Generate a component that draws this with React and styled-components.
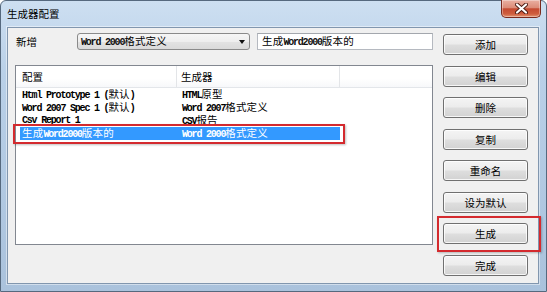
import React from 'react'
import styled, { createGlobalStyle } from 'styled-components'

const GlobalStyle = createGlobalStyle`
  html, body {
    margin: 0;
    padding: 0;
    background: #ffffff;
  }
  body {
    width: 547px;
    height: 292px;
    overflow: hidden;
  }
`

const Window = styled.div`
  box-sizing: border-box;
  width: 547px;
  height: 292px;
  display: flex;
  flex-direction: column;
  padding: 0 7px 7px 6px;
  border: 1px solid #56697e;
  border-radius: 6px 6px 0 0;
  background: linear-gradient(180deg, #cddff1 0%, #b9d0e8 25%, #aac2dc 100%);
  font-family: "Noto Sans CJK SC", sans-serif;
  color: #000;
`

const TitleBar = styled.div`
  height: 26px;
  display: flex;
  align-items: center;
`

const Title = styled.div`
  font-size: 10.5px;
  line-height: 26px;
  color: #000;
`

const CloseButton = styled.div`
  box-sizing: border-box;
  align-self: flex-start;
  margin-left: auto;
  margin-right: -2px;
  margin-top: -1px;
  width: 40px;
  height: 18px;
  display: flex;
  align-items: center;
  justify-content: center;
  border: 1px solid #7a2a1e;
  border-top: none;
  border-radius: 0 0 5px 5px;
  background: linear-gradient(180deg, #eab0a2 0%, #dc8c78 45%, #c54a31 52%, #cf5e3e 82%, #e39573 100%);
  box-shadow: inset 0 0 0 1px rgba(255, 255, 255, 0.35);
`

const Client = styled.div`
  flex: 1;
  display: flex;
  gap: 10px;
  padding: 5px 10px 0 7px;
  background: #f0f0f0;
  border: 1px solid #8196ae;
  box-shadow: 0 0 0 1px rgba(255, 255, 255, 0.45);
`

const MainColumn = styled.div`
  width: 418px;
  display: flex;
  flex-direction: column;
`

const TopRow = styled.div`
  height: 17px;
  display: flex;
  align-items: center;
`

const Label = styled.div`
  width: 61px;
  padding-left: 1px;
  font-size: 10.5px;
`

const Combo = styled.div`
  box-sizing: border-box;
  width: 173px;
  height: 17px;
  display: flex;
  align-items: center;
  padding: 0 4px 0 3px;
  border: 1px solid #8a8a8a;
  border-radius: 3px;
  background: linear-gradient(180deg, #f6f6f6 0%, #eeeeee 50%, #e3e3e3 51%, #dadada 100%);
`

const Arrow = styled.div`
  margin-left: auto;
  width: 0;
  height: 0;
  border-left: 3.5px solid transparent;
  border-right: 3.5px solid transparent;
  border-top: 4px solid #111;
`

const Field = styled.div`
  box-sizing: border-box;
  width: 176px;
  height: 17px;
  margin-left: 7px;
  display: flex;
  align-items: center;
  padding-left: 4px;
  background: #fff;
  border: 1px solid #b5b9c0;
  border-top-color: #a3a7ad;
`

const Mixed = styled.span`
  font-family: "Liberation Mono", monospace;
  font-weight: bold;
  font-size: 10px;
  letter-spacing: -1.2px;
  white-space: pre;
  line-height: 12px;
  color: #111;
`

const Han = styled.span`
  display: inline-block;
  height: 12px;
  overflow: visible;
  font-family: "Noto Sans CJK SC", sans-serif;
  font-weight: normal;
  font-size: 10.5px;
  letter-spacing: 0.2px;
  line-height: 12px;
  color: #000;
`

const List = styled.div`
  box-sizing: border-box;
  margin-top: 15px;
  height: 180px;
  background: #fff;
  border: 1px solid #828790;
`

const Header = styled.div`
  height: 21px;
  display: flex;
  border-bottom: 1px solid #e3e6ea;
  background: linear-gradient(180deg, #ffffff 0%, #ffffff 60%, #f7f8fa 100%);
`

const HeadCell = styled.div`
  box-sizing: border-box;
  width: ${p => p.$w}px;
  flex: ${p => (p.$w ? 'none' : 1)};
  padding-left: ${p => p.$pad}px;
  display: flex;
  align-items: center;
  font-size: 10.5px;
  border-right: ${p => (p.$w ? '1px solid #e3e5e8' : 'none')};
`

const Row = styled.div`
  position: relative;
  width: 320px;
  height: 13px;
  margin-left: 4px;
  display: flex;
  align-items: center;
  background: ${p => (p.$selected ? '#3399ff' : 'transparent')};

  & span {
    color: ${p => (p.$selected ? '#ffffff' : 'inherit')};
  }

  ${p => p.$marked && `
    &::after {
      content: '';
      position: absolute;
      left: -7px;
      top: -3px;
      right: -5px;
      bottom: -4px;
      border: 2px solid #d42a2e;
      box-shadow: 1px 1px 2px rgba(0, 0, 0, 0.25);
    }
  `}
`

const Cell = styled.div`
  box-sizing: border-box;
  width: ${p => p.$w}px;
  padding-left: ${p => p.$pad}px;
  display: flex;
  align-items: center;
  height: 13px;
`

const ButtonColumn = styled.div`
  width: 85px;
  display: flex;
  flex-direction: column;
  gap: 10.5px;
  padding-top: 1px;
`

const Button = styled.div`
  position: relative;
  box-sizing: border-box;
  height: 21px;
  display: flex;
  align-items: center;
  justify-content: center;
  font-size: 10.5px;
  border: 1px solid #707070;
  border-radius: 3px;
  background: linear-gradient(180deg, #f4f4f4 0%, #ececec 48%, #dedede 52%, #d2d2d2 100%);
  box-shadow: inset 0 0 0 1px rgba(255, 255, 255, 0.8);

  ${p => p.$marked && `
    &::after {
      content: '';
      position: absolute;
      left: -7px;
      top: -8px;
      right: -14px;
      bottom: -9px;
      border: 2px solid #d42a2e;
      box-shadow: 1px 1px 2px rgba(0, 0, 0, 0.25);
    }
  `}
`

const isHan = /([\u3000-\u9fff\uff00-\uffef]+)/

function Text({ children }) {
  return (
    <Mixed>
      {children.split(isHan).filter(Boolean).map((part, i) =>
        isHan.test(part) ? <Han key={i}>{part}</Han> : part
      )}
    </Mixed>
  )
}

const rows = [
  ['Html Prototype 1 (默认)', 'HTML原型'],
  ['Word 2007 Spec 1 (默认)', 'Word 2007格式定义'],
  ['Csv Report 1', 'CSV报告'],
  ['生成Word2000版本的', 'Word 2000格式定义', true],
]

const buttons = ['添加', '编辑', '删除', '复制', '重命名', '设为默认', '生成', '完成']

export default function App() {
  return (
    <>
      <GlobalStyle />
      <Window>
        <TitleBar>
          <Title>生成器配置</Title>
          <CloseButton>
            <svg width="13" height="11" viewBox="0 0 13 11">
              <path d="M2 1.5 L11 9.5 M11 1.5 L2 9.5" stroke="#4a1a12" strokeWidth="4" strokeLinecap="round" />
              <path d="M2 1.5 L11 9.5 M11 1.5 L2 9.5" stroke="#ffffff" strokeWidth="2.2" strokeLinecap="round" />
            </svg>
          </CloseButton>
        </TitleBar>
        <Client>
          <MainColumn>
            <TopRow>
              <Label>新增</Label>
              <Combo>
                <Text>Word 2000格式定义</Text>
                <Arrow />
              </Combo>
              <Field>
                <Text>生成Word2000版本的</Text>
              </Field>
            </TopRow>
            <List>
              <Header>
                <HeadCell $w={161} $pad={6}>配置</HeadCell>
                <HeadCell $w={163} $pad={4}>生成器</HeadCell>
                <HeadCell $pad={0} />
              </Header>
              {rows.map(([name, gen, sel]) => (
                <Row key={name} $selected={sel} $marked={sel}>
                  <Cell $w={157} $pad={2}><Text>{name}</Text></Cell>
                  <Cell $w={163} $pad={5}><Text>{gen}</Text></Cell>
                </Row>
              ))}
            </List>
          </MainColumn>
          <ButtonColumn>
            {buttons.map(b => (
              <Button key={b} $marked={b === '生成'}>{b}</Button>
            ))}
          </ButtonColumn>
        </Client>
      </Window>
    </>
  )
}
